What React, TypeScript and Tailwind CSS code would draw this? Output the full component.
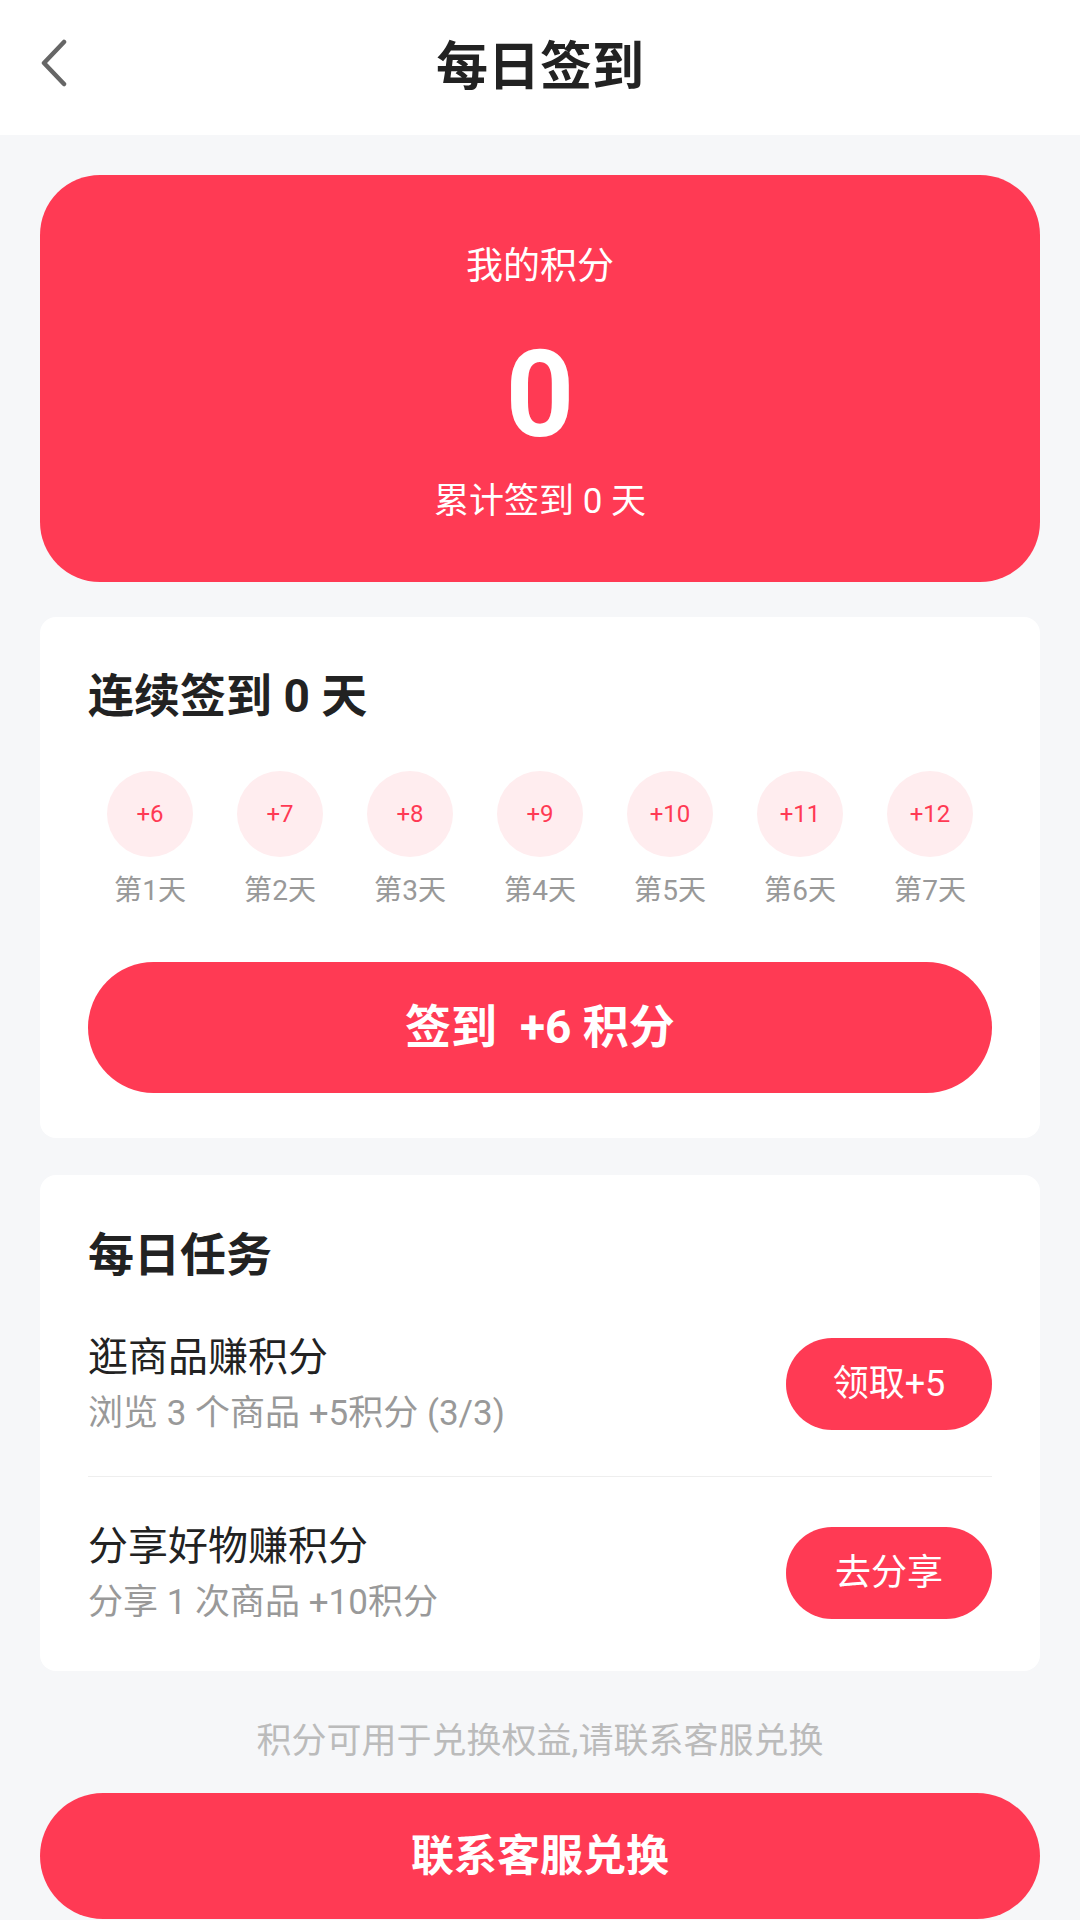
const days = [
  { day: 1, pts: 6 },
  { day: 2, pts: 7 },
  { day: 3, pts: 8 },
  { day: 4, pts: 9 },
  { day: 5, pts: 10 },
  { day: 6, pts: 11 },
  { day: 7, pts: 12 },
];

const tasks = [
  { title: '逛商品赚积分', desc: '浏览 3 个商品 +5积分 (3/3)', action: '领取+5' },
  { title: '分享好物赚积分', desc: '分享 1 次商品 +10积分', action: '去分享' },
];

export default function App() {
  return (
    <div
      className="w-[1080px] min-h-[1920px] bg-[#f6f7f9] flex flex-col"
      style={{ fontFamily: 'Roboto, "Noto Sans CJK SC", sans-serif' }}
    >
      {/* Header */}
      <header className="h-[135px] bg-white flex items-center relative">
        <svg
          className="absolute left-[40px] top-[39px]"
          width="28"
          height="48"
          viewBox="0 0 28 48"
          fill="none"
          stroke="#666"
          strokeWidth="4.5"
          strokeLinecap="round"
          strokeLinejoin="round"
        >
          <polyline points="24,3 4,24 24,45" />
        </svg>
        <h1 className="flex-1 text-center text-[52px] font-bold text-[#222] leading-none">每日签到</h1>
      </header>

      <main className="px-[40px] flex flex-col">
        {/* Points card */}
        <section className="mt-[40px] h-[407px] rounded-[60px] bg-[#ff3a54] flex flex-col items-center text-white pt-[68px]">
          <div className="text-[37px] leading-[48px]">我的积分</div>
          <div className="mt-[44px] text-[120px] leading-[120px] font-bold">0</div>
          <div className="mt-[23px] text-[35px] leading-[48px]">累计签到 0 天</div>
        </section>

        {/* Streak card */}
        <section className="mt-[35px] bg-white rounded-[16px] px-[48px] pt-[51px] pb-[45px]">
          <h2 className="text-[46px] leading-[56px] font-bold text-[#222]">连续签到 0 天</h2>
          <div className="mt-[47px] flex justify-between">
            {days.map((d) => (
              <div key={d.day} className="w-[124px] flex flex-col items-center">
                <div className="w-[86px] h-[86px] rounded-full bg-[#ffedef] flex items-center justify-center text-[24px] text-[#ff3a54]">
                  +{d.pts}
                </div>
                <div className="mt-[16px] text-[28px] leading-[36px] text-[#999]">第{d.day}天</div>
              </div>
            ))}
          </div>
          <button className="mt-[53px] w-full h-[131px] rounded-full bg-[#ff3a54] text-white text-[46px] font-bold">
            签到&nbsp; +6 积分
          </button>
        </section>

        {/* Daily tasks */}
        <section className="mt-[37px] bg-white rounded-[16px] px-[48px] pt-[52px] pb-[48px]">
          <h2 className="text-[46px] leading-[56px] font-bold text-[#222]">每日任务</h2>
          {tasks.map((t, i) => (
            <div
              key={t.title}
              className={
                i === 0
                  ? 'flex items-center justify-between pt-[51px] pb-[42px] border-b border-[#eeeeee]'
                  : 'flex items-center justify-between pt-[46px]'
              }
            >
              <div className="flex flex-col">
                <div className="text-[40px] leading-[48px] text-[#222]">{t.title}</div>
                <div className="mt-[12px] text-[35px] leading-[40px] text-[#999]">{t.desc}</div>
              </div>
              <button className="w-[206px] h-[92px] rounded-full bg-[#ff3a54] text-white text-[36px]">
                {t.action}
              </button>
            </div>
          ))}
        </section>

        <p className="mt-[49px] text-center text-[35px] leading-[44px] text-[#bbbbbb]">
          积分可用于兑换权益,请联系客服兑换
        </p>

        <button className="mt-[29px] w-full h-[126px] rounded-full bg-[#ff3a54] text-white text-[43px] font-bold">
          联系客服兑换
        </button>
      </main>
    </div>
  );
}
